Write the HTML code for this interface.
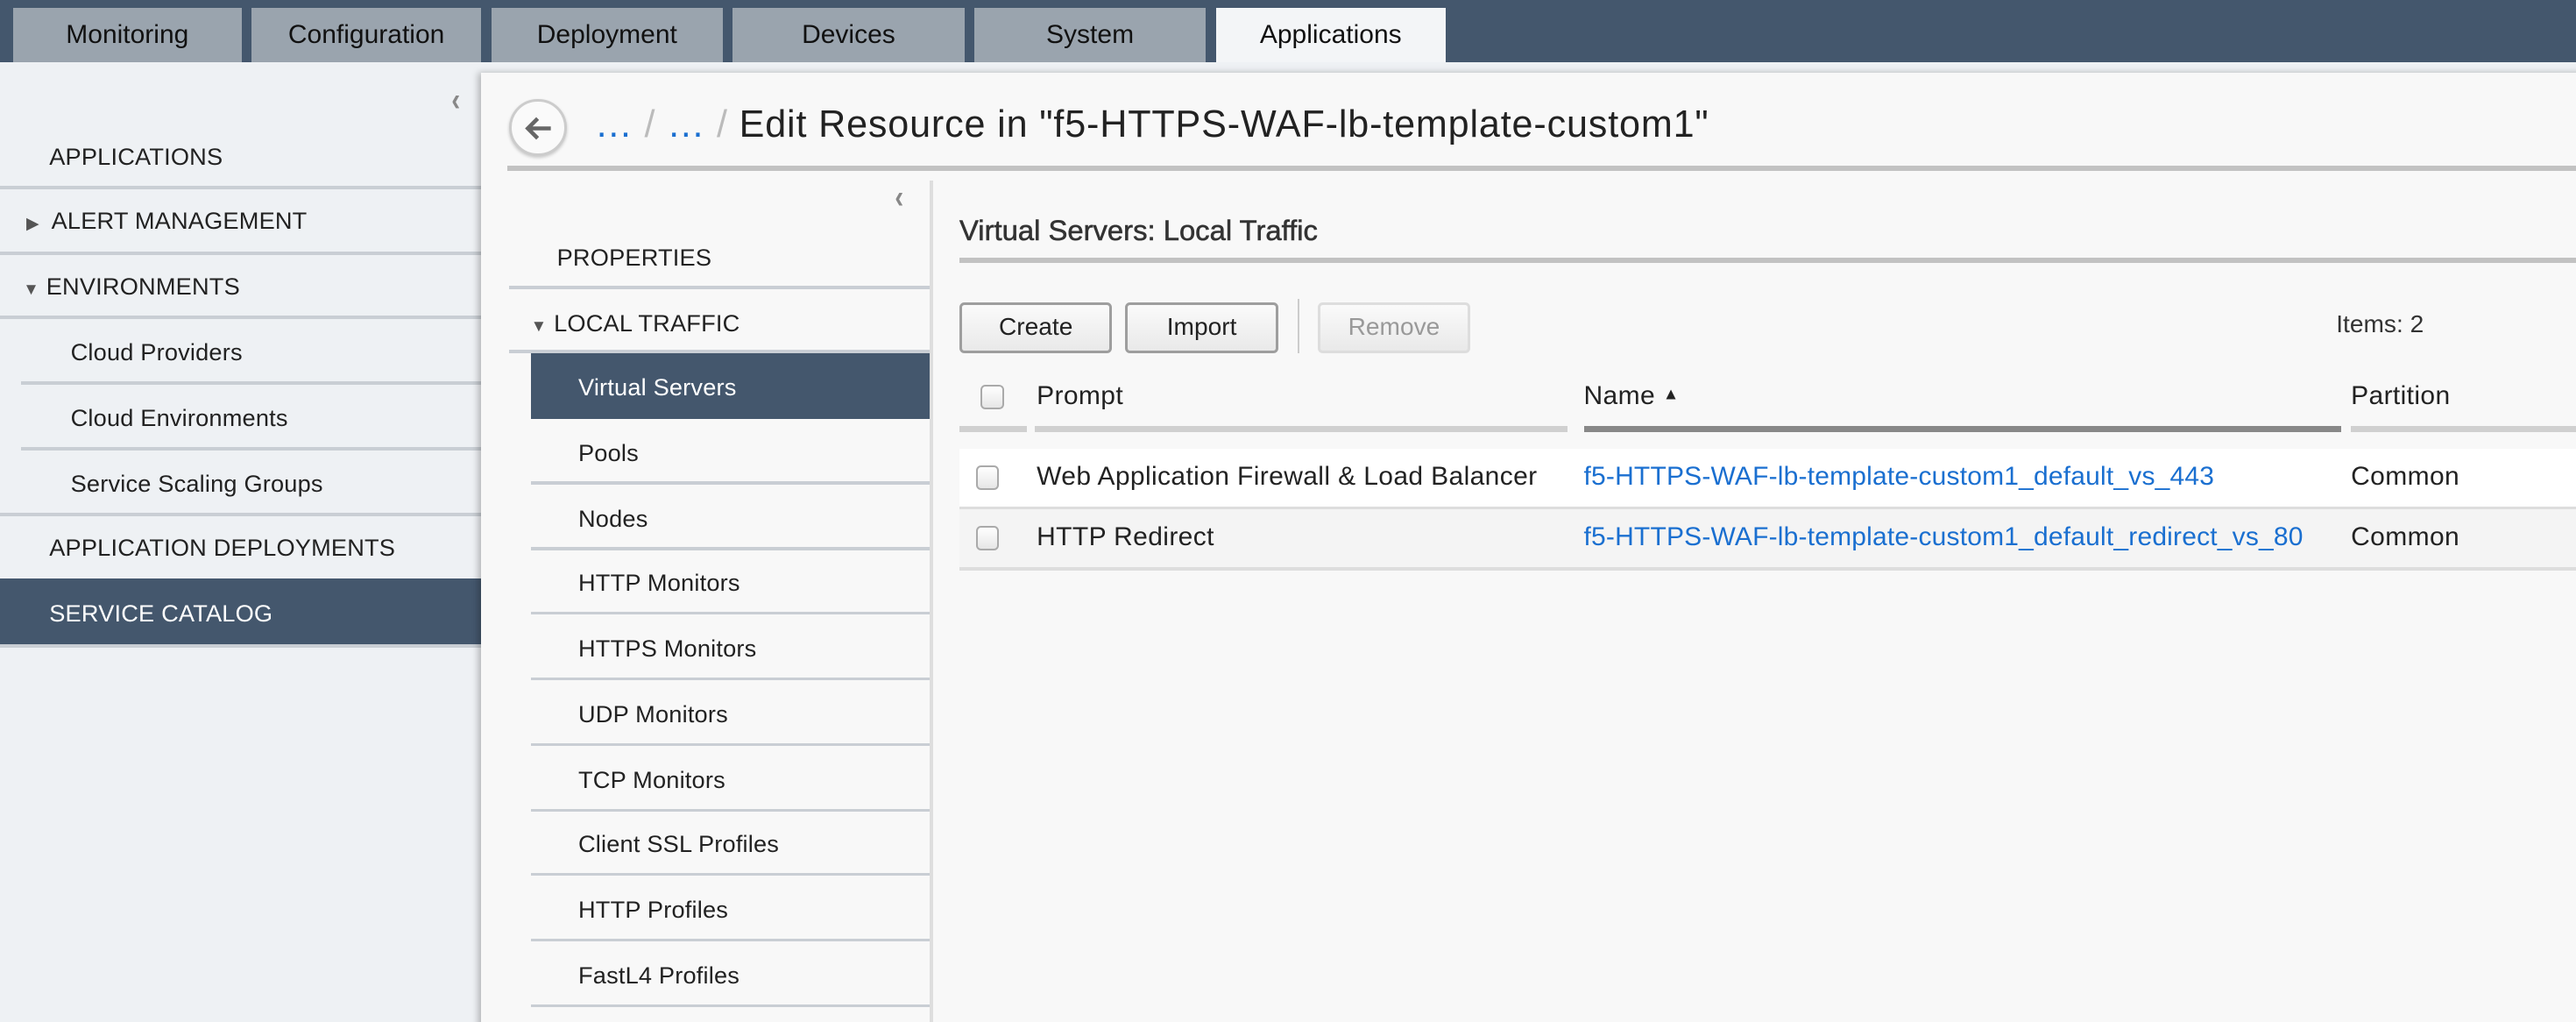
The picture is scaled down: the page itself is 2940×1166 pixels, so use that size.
<!DOCTYPE html>
<html><head><meta charset="utf-8"><style>
*{margin:0;padding:0;box-sizing:border-box}
html,body{width:2940px;height:1166px;overflow:hidden;background:#eef1f4}
#w{zoom:1.875;width:1568px;height:622px;position:relative;font-family:"Liberation Sans",sans-serif;color:#222;background:#eef1f4;overflow:hidden}
.a{position:absolute;white-space:nowrap}
.top{left:0;top:0;width:1568px;height:38px;background:#44576d}
.tab{top:5px;height:33px;width:140px;background:#9aa4ae;font-size:16px;text-align:center;line-height:33px;color:#111}
.tab.on{background:#f3f5f7}
.ln{position:absolute;height:2px;background:#c9ced4}
.sn{font-size:14.5px;color:#222;letter-spacing:.1px}
.panel{left:293px;top:44px;width:1290px;height:600px;background:#f8f8f8;box-shadow:-2px 0 4px rgba(0,0,0,.25)}
.btn{top:184px;height:31px;width:93px;border:2px solid #9e9e9e;border-radius:3px;background:linear-gradient(#fafafa,#e9e9e9);font-size:15px;text-align:center;line-height:27px}
.cb{width:14px;height:15px;border:1.5px solid #aaa;border-radius:3px;background:linear-gradient(#fff,#e6e6e6)}
.lk{color:#1a6fd0;font-size:16px;letter-spacing:.1px}
.td{font-size:16px;letter-spacing:.2px}
.col{font-size:20px;color:#888;font-weight:bold;transform:scaleX(.8)}
</style></head><body><div id="w">
<div class="a top"></div>
<div class="a tab" style="left:8px;width:139px">Monitoring</div>
<div class="a tab" style="left:153px">Configuration</div>
<div class="a tab" style="left:299px;width:141px">Deployment</div>
<div class="a tab" style="left:446px;width:141px">Devices</div>
<div class="a tab" style="left:593px;width:141px">System</div>
<div class="a tab on" style="left:740px">Applications</div>

<div class="a col" style="left:274px;top:49px">‹</div>
<div class="a sn" style="left:30px;top:87px">APPLICATIONS</div>
<div class="ln" style="left:0;top:113px;width:293px"></div>
<div class="a sn" style="left:16px;top:126px"><span style="font-size:10px;color:#555">▶</span>&nbsp; ALERT MANAGEMENT</div>
<div class="ln" style="left:0;top:153px;width:293px"></div>
<div class="a sn" style="left:14px;top:166px"><span style="font-size:10px;color:#555">▼</span>&nbsp;ENVIRONMENTS</div>
<div class="ln" style="left:0;top:192px;width:293px"></div>
<div class="a sn" style="left:43px;top:206px">Cloud Providers</div>
<div class="ln" style="left:13px;top:232px;width:280px"></div>
<div class="a sn" style="left:43px;top:246px">Cloud Environments</div>
<div class="ln" style="left:13px;top:272px;width:280px"></div>
<div class="a sn" style="left:43px;top:286px">Service Scaling Groups</div>
<div class="ln" style="left:0;top:312px;width:293px"></div>
<div class="a sn" style="left:30px;top:325px">APPLICATION DEPLOYMENTS</div>
<div class="a" style="left:0;top:352px;width:293px;height:40px;background:#44576d"></div>
<div class="a sn" style="left:30px;top:365px;color:#fff">SERVICE CATALOG</div>
<div class="ln" style="left:0;top:392px;width:293px"></div>

<div class="a panel"></div>
<div class="a" style="left:310px;top:60px;width:35px;height:35px;border-radius:50%;border:2px solid #ccc;background:#fafafa;box-shadow:0 1px 2px rgba(0,0,0,.2)"></div>
<svg class="a" style="left:316px;top:66px" width="24" height="24" viewBox="0 0 24 24"><path d="M19 12H6M11 6l-6 6 6 6" stroke="#666" stroke-width="2.4" fill="none"/></svg>
<div class="a" style="left:362px;top:63px;font-size:23px;color:#222;letter-spacing:.45px"><span style="color:#1a6fd0">…</span> <span style="color:#bbb">/</span> <span style="color:#1a6fd0">…</span> <span style="color:#bbb">/</span> Edit Resource in "f5-HTTPS-WAF-lb-template-custom1"</div>
<div class="ln" style="left:309px;top:101px;width:1260px;height:3px;background:#c2c2c2"></div>

<div class="a" style="left:566px;top:110px;width:2px;height:520px;background:#dedede"></div>
<div class="a col" style="left:544px;top:108px">‹</div>
<div class="a sn" style="left:339px;top:148px">PROPERTIES</div>
<div class="ln" style="left:310px;top:174px;width:256px"></div>
<div class="a sn" style="left:323px;top:188px"><span style="font-size:10px;color:#555">▼</span>&nbsp;LOCAL TRAFFIC</div>
<div class="ln" style="left:310px;top:213px;width:256px"></div>
<div class="a" style="left:323px;top:215px;width:243px;height:40px;background:#44576d"></div>
<div class="a sn" style="left:352px;top:227px;color:#fff">Virtual Servers</div>
<div class="a sn" style="left:352px;top:267px">Pools</div>
<div class="ln" style="left:323px;top:293px;width:243px"></div>
<div class="a sn" style="left:352px;top:307px">Nodes</div>
<div class="ln" style="left:323px;top:333px;width:243px"></div>
<div class="a sn" style="left:352px;top:346px">HTTP Monitors</div>
<div class="ln" style="left:323px;top:372px;width:243px"></div>
<div class="a sn" style="left:352px;top:386px">HTTPS Monitors</div>
<div class="ln" style="left:323px;top:412px;width:243px"></div>
<div class="a sn" style="left:352px;top:426px">UDP Monitors</div>
<div class="ln" style="left:323px;top:452px;width:243px"></div>
<div class="a sn" style="left:352px;top:466px">TCP Monitors</div>
<div class="ln" style="left:323px;top:492px;width:243px"></div>
<div class="a sn" style="left:352px;top:505px">Client SSL Profiles</div>
<div class="ln" style="left:323px;top:531px;width:243px"></div>
<div class="a sn" style="left:352px;top:545px">HTTP Profiles</div>
<div class="ln" style="left:323px;top:571px;width:243px"></div>
<div class="a sn" style="left:352px;top:585px">FastL4 Profiles</div>
<div class="ln" style="left:323px;top:611px;width:243px"></div>

<div class="a" style="left:584px;top:130px;font-size:17.5px;color:#333;-webkit-text-stroke:.3px #333">Virtual Servers: Local Traffic</div>
<div class="ln" style="left:584px;top:157px;width:984px;height:3px;background:#c2c2c2"></div>
<div class="a btn" style="left:584px">Create</div>
<div class="a btn" style="left:685px">Import</div>
<div class="a" style="left:790px;top:182px;width:1px;height:33px;background:#ccc"></div>
<div class="a btn" style="left:802px;border-color:#ddd;color:#999">Remove</div>
<div class="a" style="left:1422px;top:189px;font-size:15px;color:#333">Items: 2</div>

<div class="a cb" style="left:597px;top:234px"></div>
<div class="a td" style="left:631px;top:232px">Prompt</div>
<div class="a td" style="left:964px;top:232px">Name <span style="font-size:10px;vertical-align:3px">▲</span></div>
<div class="a td" style="left:1431px;top:232px">Partition</div>
<div class="a" style="left:584px;top:259px;width:41px;height:4px;background:#d0d0d0"></div>
<div class="a" style="left:630px;top:259px;width:324px;height:4px;background:#d0d0d0"></div>
<div class="a" style="left:964px;top:259px;width:461px;height:4px;background:#888"></div>
<div class="a" style="left:1431px;top:259px;width:137px;height:4px;background:#d0d0d0"></div>

<div class="a" style="left:584px;top:273px;width:984px;height:36px;background:#fff"></div>
<div class="ln" style="left:584px;top:308px;width:984px;background:#ddd"></div>
<div class="a" style="left:584px;top:310px;width:984px;height:36px;background:#f4f4f4"></div>
<div class="ln" style="left:584px;top:345px;width:984px;background:#ddd"></div>
<div class="a cb" style="left:594px;top:283px"></div>
<div class="a td" style="left:631px;top:281px">Web Application Firewall &amp; Load Balancer</div>
<div class="a lk" style="left:964px;top:281px">f5-HTTPS-WAF-lb-template-custom1_default_vs_443</div>
<div class="a td" style="left:1431px;top:281px">Common</div>
<div class="a cb" style="left:594px;top:320px"></div>
<div class="a td" style="left:631px;top:318px">HTTP Redirect</div>
<div class="a lk" style="left:964px;top:318px">f5-HTTPS-WAF-lb-template-custom1_default_redirect_vs_80</div>
<div class="a td" style="left:1431px;top:318px">Common</div>
</div></body></html>
